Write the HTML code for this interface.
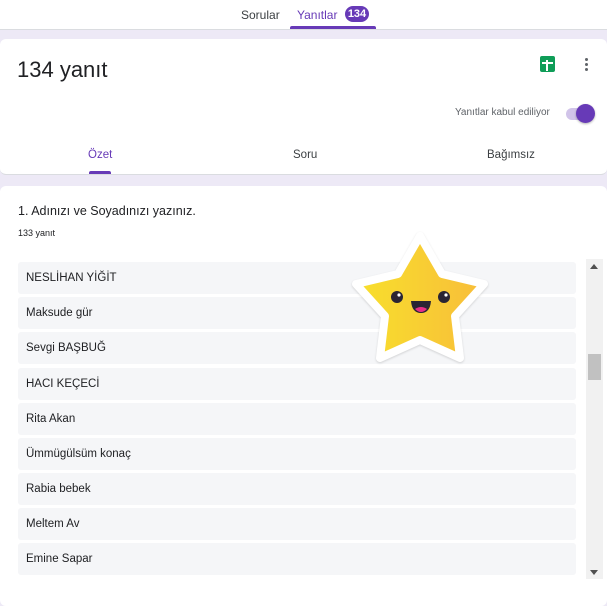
<!DOCTYPE html><html><head><style>
body{margin:0;width:607px;height:596px;background:#ede9f6;font-family:"Liberation Sans",sans-serif;position:relative;overflow:hidden;color:#202124}
.a{position:absolute}
.row{position:absolute;left:18px;width:558px;height:32px;background:#f5f6f8;border-radius:3px;font-size:11.5px;line-height:32px;text-indent:8px;color:#202124}
</style></head><body>
<div class="a" style="left:0;top:0;width:607px;height:29px;background:#fff;border-bottom:1px solid #dadce0"></div>
<div class="a" style="left:241px;top:8px;font-size:12px;color:#3c4043">Sorular</div>
<div class="a" style="left:297px;top:8px;font-size:12px;color:#673ab7">Yanıtlar</div>
<div class="a" style="left:345px;top:6px;width:24px;height:16px;border-radius:8px;background:#673ab7;color:#fff;font-size:11px;font-weight:bold;text-align:center;line-height:16px">134</div>
<div class="a" style="left:290px;top:26px;width:86px;height:3px;background:#673ab7;border-radius:2px 2px 0 0"></div>
<div class="a" style="left:0;top:39px;width:607px;height:135px;background:#fff;border-radius:6px;border-bottom:1px solid #dadce0"></div>
<div class="a" style="left:17px;top:57px;font-size:22px;color:#202124">134 yanıt</div>
<div class="a" style="left:540px;top:56px;width:15px;height:16px;background:#0f9d58;border-radius:2px"></div>
<div class="a" style="left:546px;top:60px;width:2px;height:11px;background:#fff"></div>
<div class="a" style="left:542px;top:62px;width:11px;height:2px;background:#fff"></div>
<div class="a" style="left:585px;top:58px;width:3px;height:3px;border-radius:50%;background:#5f6368;box-shadow:0 5px 0 #5f6368,0 10px 0 #5f6368"></div>
<div class="a" style="left:455px;top:107px;font-size:10px;color:#5f6368">Yanıtlar kabul ediliyor</div>
<div class="a" style="left:566px;top:108px;width:26px;height:12px;border-radius:6px;background:#d1c4e9"></div>
<div class="a" style="left:576px;top:104px;width:19px;height:19px;border-radius:50%;background:#673ab7;box-shadow:0 1px 2px rgba(0,0,0,.3)"></div>
<div class="a" style="left:88px;top:149px;font-size:11.5px;color:#673ab7">Özet</div>
<div class="a" style="left:89px;top:171px;width:22px;height:3px;background:#673ab7;border-radius:2px 2px 0 0"></div>
<div class="a" style="left:293px;top:149px;font-size:11.5px;color:#3c4043">Soru</div>
<div class="a" style="left:487px;top:149px;font-size:11.5px;color:#3c4043">Bağımsız</div>
<div class="a" style="left:0;top:186px;width:607px;height:420px;background:#fff;border-radius:6px"></div>
<div class="a" style="left:18px;top:204px;font-size:12.5px">1. Adınızı ve Soyadınızı yazınız.</div>
<div class="a" style="left:18px;top:228px;font-size:9px">133 yanıt</div>
<div class="row" style="top:262px">NESLİHAN YİĞİT</div>
<div class="row" style="top:297px">Maksude gür</div>
<div class="row" style="top:332px">Sevgi BAŞBUĞ</div>
<div class="row" style="top:368px">HACI KEÇECİ</div>
<div class="row" style="top:403px">Rita Akan</div>
<div class="row" style="top:438px">Ümmügülsüm konaç</div>
<div class="row" style="top:473px">Rabia bebek</div>
<div class="row" style="top:508px">Meltem Av</div>
<div class="row" style="top:543px">Emine Sapar</div>
<div class="a" style="left:586px;top:259px;width:17px;height:320px;background:#f1f1f1"></div>
<div class="a" style="left:590px;top:264px;width:0;height:0;border-left:4px solid transparent;border-right:4px solid transparent;border-bottom:5px solid #505050"></div>
<div class="a" style="left:590px;top:570px;width:0;height:0;border-left:4px solid transparent;border-right:4px solid transparent;border-top:5px solid #505050"></div>
<div class="a" style="left:588px;top:354px;width:13px;height:26px;background:#c1c1c1"></div>
<svg class="a" style="left:340px;top:220px" width="160" height="155" viewBox="340 220 160 155">
<defs><linearGradient id="g" x1="0" x2="1"><stop offset="0" stop-color="#f8e02c"/><stop offset="1" stop-color="#f8bd3a"/></linearGradient></defs>
<path d="M420 236 L442 274 L484 284 L455 316 L460 358 L420 340 L380 358 L385 316 L356 284 L398 274 Z" fill="url(#g)" stroke="#fff" stroke-width="8" stroke-linejoin="round" stroke-linecap="round" style="filter:drop-shadow(0 1px 1px rgba(0,0,0,.15))"/>
<circle cx="397" cy="297" r="6" fill="#2a2433"/><circle cx="399" cy="295" r="1.6" fill="#fff"/>
<circle cx="444" cy="297" r="6" fill="#2a2433"/><circle cx="446" cy="295" r="1.6" fill="#fff"/>
<path d="M411 301 H431 Q430 313 421 313 Q412 313 411 301 Z" fill="#2a2433"/>
<path d="M415 309 Q421 305 427 309 Q421 315 415 309Z" fill="#e62e86"/>
</svg>
</body></html>
